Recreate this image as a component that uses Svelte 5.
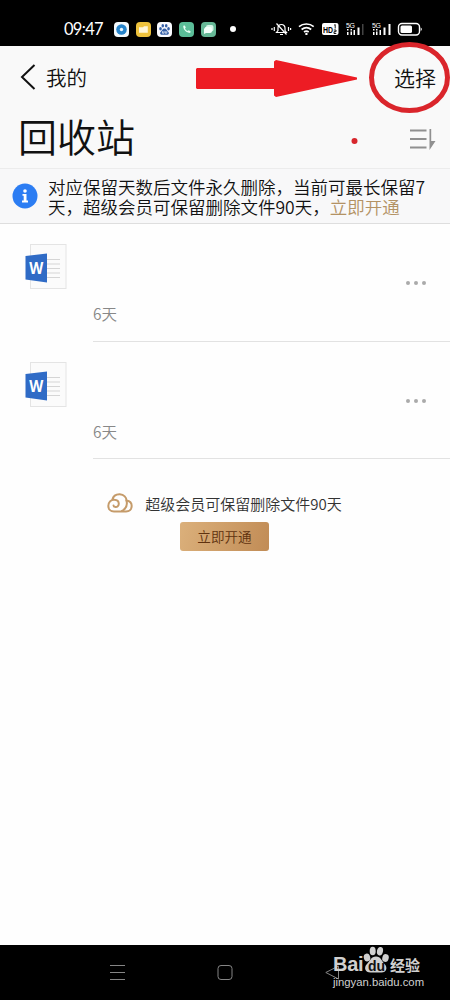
<script lang="ts">
  // 回收站文件
  const files = [
    { id: 1, remain: '6天' },
    { id: 2, remain: '6天' }
  ];
</script>

<div class="phone" lang="zh-CN">
  <header class="status-bar">
    <span class="time">09:47</span>
    <div class="app-icons">
      <svg width="15" height="15" viewBox="0 0 15 15">
        <rect width="15" height="15" rx="4" fill="#f4fafd" />
        <circle cx="7.5" cy="7.5" r="5.3" fill="#2684cb" />
        <circle cx="7.5" cy="7.5" r="1.7" fill="#e8f6ff" />
      </svg>
      <svg width="15" height="15" viewBox="0 0 15 15">
        <rect width="15" height="15" rx="4" fill="#eec23c" />
        <path d="M3 5.2h4l1-1h3.8v6.6H3z" fill="#fff6d8" />
      </svg>
      <svg width="15" height="15" viewBox="0 0 15 15">
        <rect width="15" height="15" rx="4" fill="#fafbff" />
        <g fill="#3560a8">
          <ellipse cx="3.5" cy="6.8" rx="1.3" ry="1.7" />
          <ellipse cx="5.8" cy="3.8" rx="1.3" ry="1.8" />
          <ellipse cx="9.2" cy="3.8" rx="1.3" ry="1.8" />
          <ellipse cx="11.5" cy="6.8" rx="1.3" ry="1.7" />
          <path d="M7.5 6.5c2 0 2.4 2 3.7 3.2 1.4 1.5.4 3.1-1.2 3.1H5c-1.6 0-2.6-1.6-1.2-3.1C5.1 8.5 5.5 6.5 7.5 6.5z" />
        </g>
        <path d="M5.5 9.2v2H7v-2M8.3 9.2v2h1.5v-2" fill="none" stroke="#fff" stroke-width=".7" />
      </svg>
      <svg width="15" height="15" viewBox="0 0 15 15">
        <rect width="15" height="15" rx="4" fill="#5bbd98" />
        <path d="M4.2 3.8c0 4 3 7 7 7.2l.4-1.7-2-1-1 .8C7.3 8.500 6.500 7.700 6 6.500l.8-1-1-2z" fill="#e6fff4" />
      </svg>
      <svg width="15" height="15" viewBox="0 0 15 15">
        <rect width="15" height="15" rx="4" fill="#66b896" />
        <rect x="5" y="3" width="7.5" height="6.5" rx="2" fill="#d7f4e6" />
        <path d="M4.5 5H9a2 2 0 0 1 2 2v2a2 2 0 0 1-2 2H5l-2 1V7z" fill="#f2fff9" />
      </svg>
    </div>
    <span class="more-dot"></span>
    <svg class="system-icons" width="152" height="18" viewBox="0 0 152 18">
      <g fill="none" stroke="#fff" stroke-width="1.2">
        <path d="M5.5 12.5h10l-1.5-2V8a3.500 3.500 0 0 0-7 0v2.500zM9 14.500h3M5.500 3.500l10 11M3.300 7v4M1 8v2M17.500 7v4M19.600 8v2" />
        <path d="M28 6.700c4.200-3.600 10.500-3.600 14.700 0M30.600 9.500c3-2.400 6.700-2.400 9.600 0" stroke-width="1.7" />
        <path d="M33 12c1.500-1 3.200-1 4.700 0" stroke-width="1.7" />
      </g>
      <circle cx="35.4" cy="13.9" r="1.2" fill="#fff" />
      <rect x="51" y="3" width="16.5" height="12" rx="2" fill="#fff" />
      <text x="52" y="13" font-size="9" font-weight="700" textLength="10" lengthAdjust="spacingAndGlyphs">HD</text>
      <!-- 双卡标记 1 / 2 -->
      <path d="M63.200 5.200l1-.7v4M62.800 10h2.200v1.700h-2v1.800h2.300" fill="none" stroke="#000" stroke-width=".9" />
      <g fill="#fff">
        <text x="75" y="7.500" font-size="7" textLength="9">5G</text>
        <path d="M76 9h1.500v1.500H76zM76 12h1.500v3H76zM79.500 9H81v1.500h-1.500zM79.500 11.500H81V15h-1.500zM82.500 10h1.500v5h-1.500zM86.500 7.500h2V15h-2z" />
        <path d="M91 4h1.500v11H91z" fill="#444" />
        <text x="101" y="7.500" font-size="7" textLength="9">5G</text>
        <path d="M102 9h1.500v1.500H102zM102 12h1.500v3H102zM105 9h1.500v1.500H105zM105 11.500h1.500V15H105zM108.500 10h1.500v5h-1.500zM112.500 7.500h2V15h-2zM117.500 4h2v11h-2z" />
        <rect x="129.500" y="5.500" width="11.500" height="7.500" rx="1.500" />
        <path d="M149.700 7.500c1.500.5 1.500 3 0 3.500z" />
      </g>
      <rect x="127.500" y="3.500" width="21" height="11.500" rx="3.500" fill="none" stroke="#fff" stroke-width="1.400" />
    </svg>
  </header>

  <section class="heading">
    <div class="nav-row">
      <button class="back">
        <svg width="16" height="28" viewBox="0 0 16 28">
          <path d="M14.500 2 2 14l12.500 12" fill="none" stroke="#111" stroke-width="2" />
        </svg>
        <span>我的</span>
      </button>
      <button class="select">选择</button>
    </div>
    <div class="title-row">
      <h1>回收站</h1>
      <svg width="27" height="23" viewBox="0 0 27 23">
        <path d="M1 2.500h16.500M1 11h16.500M1 19.500h16.500" stroke="#909090" stroke-width="1.800" />
        <path d="M20.500 1h1.700v12h4.300l-6 9z" fill="#909090" />
      </svg>
    </div>
  </section>

  <section class="notice">
    <svg width="26" height="26" viewBox="0 0 26 26">
      <circle cx="13" cy="13" r="12.500" fill="#2c7df3" />
      <circle cx="13" cy="8" r="1.800" fill="#fff" />
      <path d="M10.500 11h4v6.500H16v2h-6v-2h1.700v-4.700h-1.200z" fill="#fff" />
    </svg>
    <p>对应保留天数后文件永久删除，当前可最长保留7<br />天，超级会员可保留删除文件90天，<a href="#vip">立即开通</a></p>
  </section>

  <main>
    {#each files as file (file.id)}
      <article class="file">
        <svg class="word" width="42" height="46" viewBox="0 0 42 46">
          <rect x="5.500" y=".5" width="35.500" height="44" fill="#fbfbfb" stroke="#e4e4e4" />
          <path d="M22 15.500h18M22 20h18M22 24.500h18M22 29h18M22 33.500h18" stroke="#d5d5d5" stroke-width="1.100" stroke-dasharray="13 9" />
          <path d="M.5 12 22 9.500v29L.5 35.500z" fill="#2f6bc6" />
          <text x="11.300" y="29.500" text-anchor="middle" font-size="16" font-weight="700" textLength="14" lengthAdjust="spacingAndGlyphs">W</text>
        </svg>
        <div class="file-body">
          <div class="dots"><i></i><i></i><i></i></div>
          <span class="remain">{file.remain}</span>
        </div>
      </article>
    {/each}

    <div class="vip">
      <div class="vip-text">
        <svg width="26" height="20" viewBox="0 0 26 20">
          <g fill="none" stroke="#c59b6a" stroke-width="2" stroke-linecap="round">
            <path d="M5.300 6.800C6.200 3 9.500 1.200 12.800 1.300c4.200.2 6.700 3.200 6.700 6.200 3.300.5 5.200 2.800 5.200 5.500 0 3.300-2.400 5.500-5.700 5.500H7c-3.500 0-5.700-2.400-5.700-5.600 0-3.700 2.700-6.300 5.900-6.200 2.900.1 4.600 2 4.600 4.100 0 2.200-1.700 3.500-3.300 3.300-1.400-.2-2-1.100-2-1.500" />
            <path d="M19.500 7.500c1.100 4.500-.8 8.500-4.500 10.500" />
          </g>
        </svg>
        <span>超级会员可保留删除文件90天</span>
      </div>
      <button class="open">立即开通</button>
    </div>
  </main>

  <footer class="nav-bar">
    <svg width="16" height="16" viewBox="0 0 16 16"><path d="M1 .5h15M1 7.500h15M1 14.500h15" stroke="#858585" /></svg>
    <svg width="16" height="16" viewBox="0 0 16 16"><rect x="1" y=".5" width="14" height="14" rx="3" fill="none" stroke="#858585" /></svg>
    <svg width="16" height="16" viewBox="0 0 16 16"><path d="M13.500 1v13L.8 7.500z" fill="none" stroke="#858585" /></svg>
  </footer>

  <!-- 操作指引标注 -->
  <svg class="guide" width="450" height="170" viewBox="0 0 450 170">
    <path d="M197 68h77v-6.500l2-1.500 81 17.500v2L276 97l-2-1.500V89h-77l-1-1V69z" fill="#ed1c24" />
    <ellipse cx="409.500" cy="77.500" rx="38" ry="33" fill="none" stroke="#da252b" stroke-width="5" />
    <circle cx="354.500" cy="141" r="3" fill="#d7262c" />
  </svg>

  <!-- 水印 -->
  <div class="watermark">
    <div class="brand">
      <span class="bai">Bai</span>
      <span class="paw">
        <svg width="27" height="28" viewBox="0 0 27 28">
          <g fill="#d0d0d0">
            <ellipse cx="4" cy="11.500" rx="3.200" ry="4" transform="rotate(-15 4 11.500)" />
            <ellipse cx="9.700" cy="5" rx="3" ry="4.300" />
            <ellipse cx="17" cy="5.200" rx="3" ry="4.300" transform="rotate(12 17 5.200)" />
            <ellipse cx="22.500" cy="12" rx="3.200" ry="4" transform="rotate(15 22.500 12)" />
            <path d="M13 10.500c5 0 5.500 4.500 8.500 7.500 3.500 3.500 2 8.500-3 8.500h-11c-5.500 0-7-5-3.500-8.500 3-3 4-7.500 9-7.500z" />
          </g>
        </svg>
        <b>du</b>
      </span>
      <span class="jingyan">经验</span>
    </div>
    <div class="site">jingyan.baidu.com</div>
  </div>
</div>

<style>
  :global(body) {
    background: #fefefe;
  }

  .phone {
    position: relative;
    display: flex;
    flex-direction: column;
    width: 450px;
    height: 1000px;
    overflow: hidden;
    background: #fefefe;
    color: #111;
    font-family: 'Noto Sans CJK SC', sans-serif;
    font-weight: 350;
  }

  button {
    padding: 0;
    border: 0;
    background: none;
    color: inherit;
    font-family: inherit;
    font-weight: inherit;
    cursor: pointer;
  }

  svg {
    display: block;
    flex: none;
  }

  .status-bar {
    display: flex;
    align-items: center;
    height: 46px;
    padding: 12px 27px 0 64px;
    box-sizing: border-box;
    background: #000;
    color: #fff;
  }

  .time {
    width: 50px;
    font: 16.5px/20px Lato, sans-serif;
    letter-spacing: -0.7px;
  }

  .app-icons {
    display: flex;
    gap: 6.7px;
  }

  .more-dot {
    width: 6px;
    height: 6px;
    margin-left: 14px;
    border-radius: 50%;
    background: #fff;
  }

  .system-icons {
    margin-left: 35px;
    font-family: 'Liberation Sans', sans-serif;
  }

  .heading {
    height: 122px;
    box-sizing: border-box;
    padding: 11px 14px 0 20px;
    background: #f9f9f9;
  }

  .nav-row,
  .title-row {
    display: flex;
    align-items: center;
    justify-content: space-between;
  }

  .nav-row {
    height: 40px;
  }

  .back {
    display: flex;
    align-items: center;
    gap: 10px;
    font-size: 20.5px;
  }

  .select {
    font-size: 21px;
  }

  .title-row {
    height: 82px;
    align-items: flex-start;
  }

  .title-row svg {
    margin-top: 31px;
  }

  h1 {
    margin: 10px 0 0 -2px;
    font-size: 39px;
    font-weight: inherit;
    line-height: 56px;
  }

  .notice {
    display: flex;
    align-items: center;
    gap: 10px;
    height: 56px;
    box-sizing: border-box;
    padding-left: 12px;
    border-top: 1px solid #ececec;
    border-bottom: 1px solid #dedede;
    background: #f8f8f9;
  }

  .notice p {
    margin: 2px 0 0;
    font-size: 17.5px;
    line-height: 20.5px;
    white-space: nowrap;
  }

  .notice a {
    color: #b39264;
    text-decoration: none;
  }

  main {
    flex: 1;
  }

  .file {
    display: flex;
    height: 117.5px;
  }

  .word {
    margin: 20px 26px 0 25px;
    font-family: 'Open Sans', sans-serif;
  }

  .word text {
    fill: #fff;
  }

  .file-body {
    flex: 1;
    box-sizing: border-box;
    padding-top: 57px;
    border-bottom: 1px solid #e2e2e2;
  }

  .dots {
    display: flex;
    justify-content: flex-end;
    gap: 4px;
    padding-right: 24px;
  }

  .dots i {
    width: 4px;
    height: 4px;
    border-radius: 50%;
    background: #aaa;
  }

  .remain {
    display: block;
    margin-top: 16px;
    color: #888;
    font-size: 15.5px;
    line-height: 24px;
  }

  .vip {
    display: flex;
    flex-direction: column;
    align-items: center;
    padding: 32px 1px 0 0;
  }

  .vip-text {
    display: flex;
    align-items: center;
    gap: 12px;
    height: 24px;
    color: #333;
    font-size: 15px;
  }

  .open {
    width: 89px;
    height: 29px;
    margin-top: 7px;
    padding-bottom: 1px;
    border-radius: 3px;
    background: linear-gradient(105deg, #dbb07b, #c18c56);
    color: #60320f;
    font-size: 13.6px;
  }

  .nav-bar {
    display: flex;
    align-items: center;
    gap: 92px;
    height: 55px;
    padding-left: 109px;
    background: #000;
  }

  .guide {
    position: absolute;
    top: 0;
    left: 0;
    pointer-events: none;
  }

  .watermark {
    position: absolute;
    left: 333px;
    top: 946px;
    width: 92px;
    color: #d0d0d0;
    font-family: 'Liberation Sans', sans-serif;
    font-weight: 400;
  }

  .brand {
    display: flex;
    align-items: flex-end;
    height: 28px;
  }

  .bai {
    width: 30px;
    font-size: 20px;
    font-weight: 700;
    line-height: 20px;
    letter-spacing: -0.3px;
  }

  .paw {
    position: relative;
  }

  .paw b {
    position: absolute;
    left: 5px;
    bottom: 1px;
    color: #111;
    font-size: 14px;
    line-height: 14px;
  }

  .jingyan {
    font: 700 15px/18px 'Noto Sans CJK SC', sans-serif;
  }

  .site {
    font-size: 11.3px;
    line-height: 16px;
    letter-spacing: 0;
    white-space: nowrap;
  }
</style>
